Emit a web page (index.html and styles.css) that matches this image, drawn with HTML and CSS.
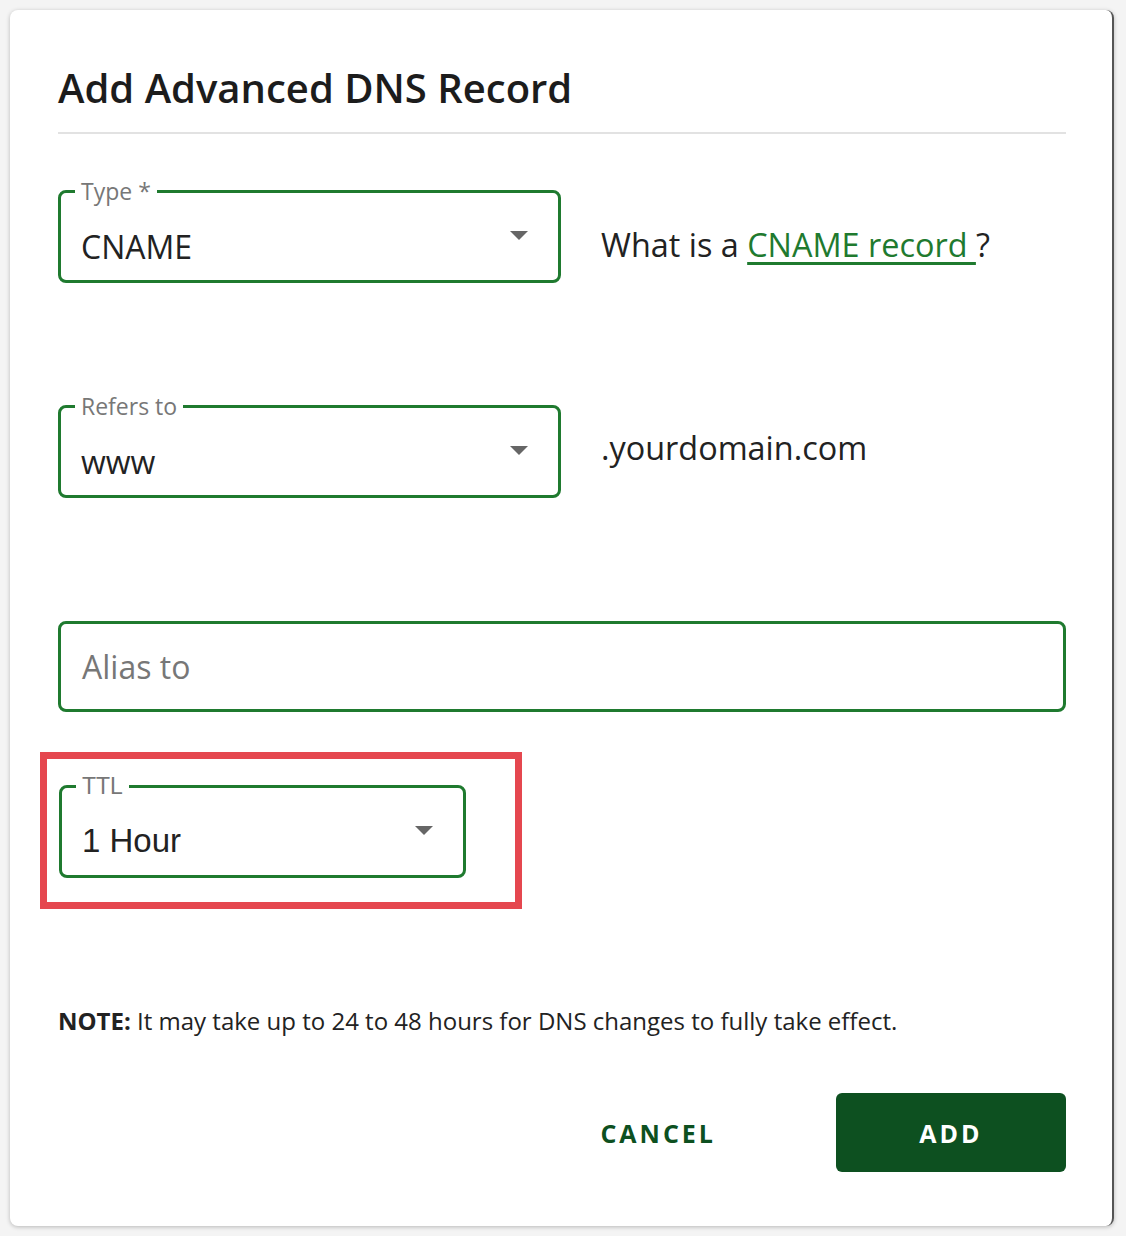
FILE: index.html
```html
<!DOCTYPE html>
<html lang="en">
<head>
    <meta charset="UTF-8">
    <meta name="viewport" content="width=device-width, initial-scale=1.0">
    <title>Add Advanced DNS Record</title>
    <link rel="stylesheet" href="styles.css">
</head>
<body>
    <div class="dialog">
        <h2 class="dialog-title">Add Advanced DNS Record</h2>

        <div class="row row-type">
            <fieldset class="field field-select">
                <legend>Type *</legend>
                <span class="field-value">CNAME</span>
                <span class="arrow"></span>
            </fieldset>
            <p class="side-text side-help">What is a <a href="#">CNAME record </a>?</p>
        </div>

        <div class="row row-refers">
            <fieldset class="field field-select">
                <legend>Refers to</legend>
                <span class="field-value">www</span>
                <span class="arrow"></span>
            </fieldset>
            <p class="side-text side-domain">.yourdomain.com</p>
        </div>

        <div class="row row-alias">
            <div class="field field-input">
                <span class="placeholder">Alias to</span>
            </div>
        </div>

        <div class="highlight">
            <fieldset class="field field-select field-ttl">
                <legend>TTL</legend>
                <span class="field-value">1 Hour</span>
                <span class="arrow"></span>
            </fieldset>
        </div>

        <p class="note"><strong>NOTE:</strong> It may take up to 24 to 48 hours for DNS changes to fully take effect.</p>

        <div class="actions">
            <button class="btn btn-cancel">CANCEL</button>
            <button class="btn btn-add">ADD</button>
        </div>
    </div>
</body>
</html>
```

FILE: styles.css
```css
/* Basic styles */
body {
    margin: 0;
    font-family: "Open Sans", "Noto Sans", sans-serif;
    background-color: #f4f4f4;
    color: #222;
}
.dialog {
    box-sizing: border-box;
    width: 1104px;
    height: 1216px;
    margin: 10px 12px 10px 10px;
    padding: 56px 46px 0 48px;
    background: white;
    border-radius: 8px;
    box-shadow: 0 1px 4px rgba(0, 0, 0, 0.25);
    border-right: 2px solid #555;
}
.dialog-title {
    margin: 0;
    font-size: 40px;
    font-weight: 600;
    line-height: 44px;
    padding-bottom: 22px;
    border-bottom: 2px solid #e2e2e2;
    color: #1c1c1c;
}

/* Form rows */
.row {
    display: flex;
    align-items: center;
}
.row-type {
    margin-top: 46px;
}
.row-refers {
    margin-top: 112px;
}
.row-alias {
    margin-top: 123px;
}
.field {
    box-sizing: border-box;
    position: relative;
    margin: 0;
    border: 3px solid #1f7a2f;
    border-radius: 8px;
    background: white;
}
.field-select {
    width: 503px;
    height: 103px;
    padding: 0 20px;
    display: flex;
    align-items: center;
}
.field legend {
    margin-left: -6px;
    padding: 0 6px;
    font-size: 23px;
    line-height: 22px;
    color: #777;
}
.field-value {
    font-size: 32px;
    color: #222;
    margin-top: 10px;
}
.arrow {
    position: absolute;
    right: 30px;
    top: 29px;
    width: 0;
    height: 0;
    border-left: 9px solid transparent;
    border-right: 9px solid transparent;
    border-top: 9px solid #666;
}
.side-text {
    margin: 0 0 0 40px;
    font-size: 32.4px;
    color: #222;
}
.side-help {
    margin-top: 24px;
}
.side-help a {
    color: #1f7a2f;
    text-decoration: underline;
    text-underline-offset: 5px;
}
.side-domain {
    margin-top: 0;
}
.field-input {
    width: 100%;
    height: 91px;
    padding: 0 21px;
    display: flex;
    align-items: center;
}
.placeholder {
    font-size: 32px;
    color: #777;
}

/* TTL highlight */
.highlight {
    box-sizing: border-box;
    width: 482px;
    margin: 40px 0 0 -18px;
    padding: 16px 49px 24px 12px;
    border: 7px solid #e5474f;
}
.field-ttl {
    width: 407px;
    height: 103px;
    font-family: "Liberation Sans", Arial, sans-serif;
}
.field-ttl .field-value {
    font-size: 33px;
}

/* Footer */
.note {
    margin: 95px 0 0 0;
    font-size: 24px;
    color: #222;
}
.actions {
    display: flex;
    justify-content: flex-end;
    align-items: center;
    margin-top: 56px;
}
.btn {
    font-family: "Open Sans", "Noto Sans", sans-serif;
    font-size: 25px;
    font-weight: 700;
    letter-spacing: 3px;
    border: none;
    cursor: pointer;
}
.btn-cancel {
    background: none;
    color: #0d5020;
    padding: 0 24px;
    margin-right: 96px;
}
.btn-add {
    width: 230px;
    height: 79px;
    background-color: #0d5020;
    color: white;
    border-radius: 6px;
}
```
